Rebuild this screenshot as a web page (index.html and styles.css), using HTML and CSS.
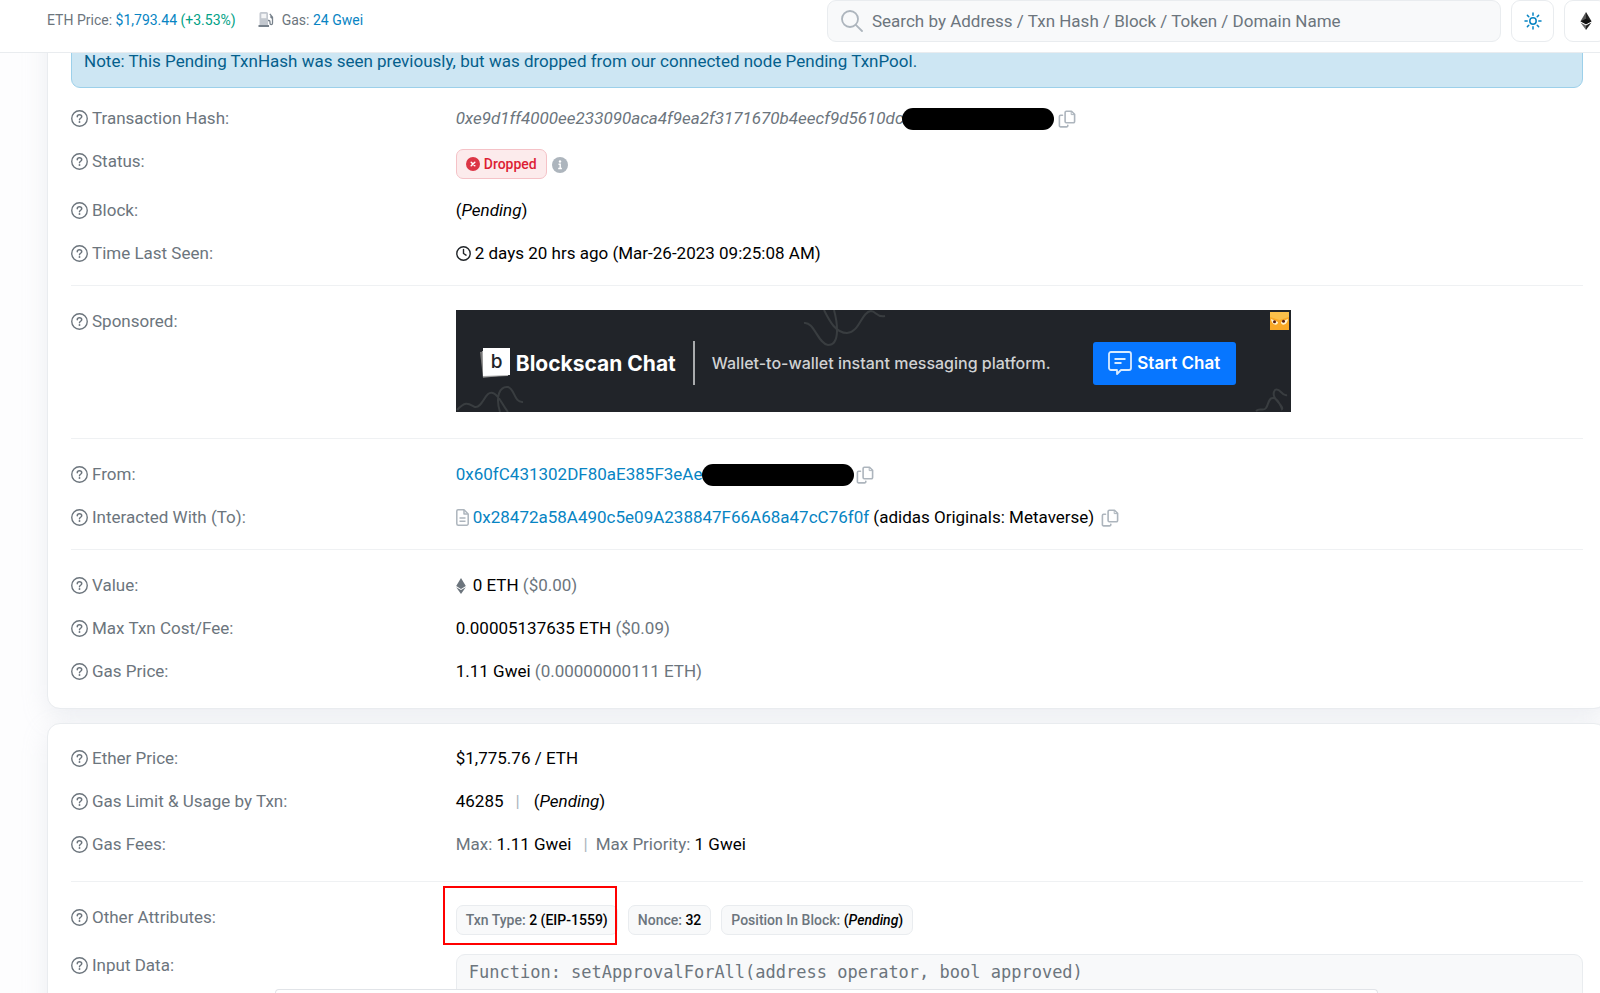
FILE: index.html
```html
<!DOCTYPE html>
<html lang="en">
<head>
<meta charset="utf-8">
<title>Transaction Details</title>
<link rel="stylesheet" href="styles.css">
</head>
<body>
<svg class="sprite" aria-hidden="true">
  <symbol id="help" viewBox="0 0 16 16"><g fill="none" stroke="currentColor" stroke-linecap="round" stroke-linejoin="round"><circle cx="8" cy="8" r="7.3" stroke-width="1.3"/><path d="M5.9 6.3c0-1.1.8-1.8 2-1.8 1.300 0 2.200.8 2.200 1.800 0 1.400-2.100 1.500-2.100 2.800" stroke-width="1.400"/></g><circle cx="8" cy="11.300" r=".9" fill="currentColor"/></symbol>
  <symbol id="copy" viewBox="0 0 18 18"><g fill="none" stroke="currentColor" stroke-width="1.600" stroke-linejoin="round" stroke-linecap="round"><path d="M8.300 1.200h5.200L16.600 4.300v7.200a1.200 1.200 0 0 1-1.200 1.200H8.300a1.200 1.200 0 0 1-1.200-1.200V2.400a1.200 1.200 0 0 1 1.200-1.200z"/><path d="M13.200 1.400v3.200h3.200"  stroke-width="1"/><path d="M4.500 5.300H2.600A1.200 1.200 0 0 0 1.400 6.500v9.200a1.200 1.200 0 0 0 1.200 1.200h6a1.200 1.200 0 0 0 1.200-1.200v-.5"/></g></symbol>
  <symbol id="eth" viewBox="0 0 10 16"><path fill="currentColor" d="M5 0l4.800 8.100L5 11 .2 8.100zM5 12l4.800-2.800L5 16 .2 9.200z"/></symbol>
</svg>
<div class="page">
  <header class="topbar">
    <div class="stats">
      <span>ETH Price: <a href="#">$1,793.44 <span class="up">(+3.53%)</span></a></span>
      <span class="gas">
        <svg class="pump" viewBox="0 0 16 16"><path fill="#c3c8cf" d="M1.500 1.500A1.500 1.500 0 0 1 3 0h5.500A1.500 1.500 0 0 1 10 1.500V13H1.500z"/><path fill="#f4f5f6" d="M3.300 1.800h5v4.400h-5z"/><path fill="#77818b" d="M.5 13h10.500v2H.5z"/><path fill="none" stroke="#77818b" stroke-width="1.300" d="M10 8.500h.8c.8 0 1.200.5 1.200 1.200v1.600c0 1.700 2.500 1.700 2.500 0V5.200L11.800 1.800M13 3.500v2l1.500 1"/></svg>
        <span>Gas: <a href="#">24 Gwei</a></span>
      </span>
    </div>
    <form class="search">
      <svg class="lens" viewBox="0 0 22 22"><g fill="none" stroke="#adb5bd" stroke-width="1.800" stroke-linecap="round"><circle cx="9" cy="9" r="8"/><path d="M14.800 14.800L21 21"/></g></svg>
      <input type="search" aria-label="Search" placeholder="Search by Address / Txn Hash / Block / Token / Domain Name">
    </form>
    <button class="tool" aria-label="Theme"><svg class="sun" viewBox="0 0 18 18"><g fill="none" stroke="#0784c3" stroke-width="1.500" stroke-linecap="round"><circle cx="9" cy="9" r="3.200"/><path d="M9 1v2.200M9 14.800V17M1 9h2.200M14.800 9H17M3.400 3.400l1.400 1.400M13.200 13.200l1.400 1.400M3.400 14.600l1.400-1.400M13.200 4.800l1.400-1.400"/></g></svg></button>
    <button class="tool last" aria-label="Network"><svg class="gem" viewBox="0 0 12 18"><path fill="#555" d="M6 0L.5 9.200 6 12.300z"/><path fill="#222" d="M6 0l5.500 9.200L6 12.300z"/><path fill="#111" d="M6 6.700L.5 9.200 6 12.300l5.500-3.100z"/><path fill="#666" d="M.5 10.400L6 18v-4.400z"/><path fill="#222" d="M11.500 10.400L6 18v-4.400z"/></svg></button>
  </header>

  <main>
    <section class="card">
      <div class="note">Note: This Pending TxnHash was seen previously, but was dropped from our connected node Pending TxnPool.</div>
      <dl class="rows">
        <div class="row"><dt><svg class="help"><use href="#help"/></svg>Transaction Hash:</dt><dd><em class="muted">0xe9d1ff4000ee233090aca4f9ea2f3171670b4eecf9d5610dc</em><span class="redacted over"></span><button class="copy" aria-label="Copy hash"><svg><use href="#copy"/></svg></button></dd></div>
        <div class="row"><dt><svg class="help"><use href="#help"/></svg>Status:</dt><dd><span class="badge danger"><svg class="cross" viewBox="0 0 14 14"><circle cx="7" cy="7" r="7" fill="#dc3545"/><path d="M5.200 5.200l3.600 3.600M8.800 5.200L5.200 8.800" stroke="#fff" stroke-width="1.500" stroke-linecap="round"/></svg>Dropped</span><svg class="info" viewBox="0 0 16 16"><circle cx="8" cy="8" r="8" fill="#adb5bd"/><circle cx="8" cy="4.500" r="1.200" fill="#fff"/><path d="M6.500 7.300h1.700v4M6.200 11.500h3.700" fill="none" stroke="#fff" stroke-width="1.400"/></svg></dd></div>
        <div class="row"><dt><svg class="help"><use href="#help"/></svg>Block:</dt><dd><span>(<em>Pending</em>)</span></dd></div>
        <div class="row"><dt><svg class="help"><use href="#help"/></svg>Time Last Seen:</dt><dd><svg class="clock" viewBox="0 0 15 15"><g fill="none" stroke="#212529" stroke-width="1.400" stroke-linecap="round"><circle cx="7.500" cy="7.500" r="6.700"/><path d="M7.500 3.500v4l2.500 1.700"/></g></svg>2 days 20 hrs ago (Mar-26-2023 09:25:08 AM)</dd></div>
      </dl>
      <hr>
      <dl class="rows">
        <div class="row"><dt><svg class="help"><use href="#help"/></svg>Sponsored:</dt><dd>
          <div class="banner">
            <svg class="squiggle top" viewBox="0 0 84 40"><path d="M2 13c10-2 14 21 24 22 13 0 9-24 6-35M22 0c6 12 12 23 23 23 13-1 14-21 24-22 5 0 6 7 14 5"/></svg>
            <svg class="squiggle left" viewBox="0 0 70 28"><path d="M1 26c9-10 12-6 18-3 8 1 10-17 18-14 6 2 8 10 15 19M44 28c-5-16 0-26 8-25 7 2 6 16 15 15"/></svg>
            <svg class="squiggle right" viewBox="0 0 34 24"><path d="M1 23c4-4 7 1 10-3s2-10 7-10 9 11 9 11c3-3-13-11-7-19 5-3 7 7 12 5"/></svg>
            <svg class="logo" viewBox="0 0 30 30"><path fill="#777" d="M0 4l24-3 3 26-24 3z"/><path fill="#aaa" d="M2 3l24-1 2 26-25 1z"/><path fill="#fff" d="M3 0h27v27L3 28z"/><text x="16.500" y="20" text-anchor="middle">b</text></svg>
            <strong>Blockscan Chat</strong>
            <span class="bar"></span>
            <span class="tagline">Wallet-to-wallet instant messaging platform.</span>
            <a class="start" href="#"><svg viewBox="0 0 24 24"><path fill="none" stroke="#d9ebff" stroke-width="1.800" stroke-linejoin="round" d="M3 1h18a2 2 0 0 1 2 2v14a2 2 0 0 1-2 2h-8l-4 4v-4H3a2 2 0 0 1-2-2V3a2 2 0 0 1 2-2zM6.500 8h11M6.500 12h7"/></svg>Start Chat</a>
            <svg class="mascot" viewBox="0 0 19 18"><path fill="#f9a826" d="M0 0h19v18H0z"/><path fill="#fbc04a" d="M0 0h19v5L9.500 8 0 5z"/><path fill="#fff3cf" d="M1 7l7 3c0 4-6 4-7-3zM18 7l-7 3c0 4 6 4 7-3z"/><circle cx="4.500" cy="9.700" r="1.500" fill="#5a1d10"/><circle cx="13.500" cy="9.200" r="1.500" fill="#5a1d10"/></svg>
          </div>
        </dd></div>
      </dl>
      <hr>
      <dl class="rows">
        <div class="row"><dt><svg class="help"><use href="#help"/></svg>From:</dt><dd><a href="#">0x60fC431302DF80aE385F3eAe</a><span class="redacted"></span><button class="copy near" aria-label="Copy sender"><svg><use href="#copy"/></svg></button></dd></div>
        <div class="row"><dt><svg class="help"><use href="#help"/></svg>Interacted With (To):</dt><dd><svg class="doc" viewBox="0 0 13 17"><g fill="none" stroke="#adb5bd" stroke-width="1.500" stroke-linejoin="round"><path d="M2 .8h6L12.200 5v9.700a1.500 1.500 0 0 1-1.500 1.500H2.300a1.500 1.500 0 0 1-1.500-1.500V2A1.200 1.200 0 0 1 2 .8z"/><path d="M8 1v4h4M3.500 9h6M3.500 12.200h6"/></g></svg><span><a href="#">0x28472a58A490c5e09A238847F66A68a47cC76f0f</a> (adidas Originals: Metaverse)</span><button class="copy far" aria-label="Copy receiver"><svg><use href="#copy"/></svg></button></dd></div>
      </dl>
      <hr>
      <dl class="rows">
        <div class="row"><dt><svg class="help"><use href="#help"/></svg>Value:</dt><dd><svg class="ethicon"><use href="#eth"/></svg><span>0 ETH <span class="muted">($0.00)</span></span></dd></div>
        <div class="row"><dt><svg class="help"><use href="#help"/></svg>Max Txn Cost/Fee:</dt><dd><span>0.00005137635 ETH <span class="muted">($0.09)</span></span></dd></div>
        <div class="row"><dt><svg class="help"><use href="#help"/></svg>Gas Price:</dt><dd><span>1.11 Gwei <span class="muted">(0.00000000111 ETH)</span></span></dd></div>
      </dl>
    </section>

    <section class="card second">
      <dl class="rows">
        <div class="row"><dt><svg class="help"><use href="#help"/></svg>Ether Price:</dt><dd>$1,775.76 / ETH</dd></div>
        <div class="row"><dt><svg class="help"><use href="#help"/></svg>Gas Limit &amp; Usage by Txn:</dt><dd>46285<span class="pipe wide">|</span><span>(<em>Pending</em>)</span></dd></div>
        <div class="row"><dt><svg class="help"><use href="#help"/></svg>Gas Fees:</dt><dd class="fees"><span><span class="muted">Max:</span> 1.11 Gwei</span><span class="pipe">|</span><span><span class="muted">Max Priority:</span> 1 Gwei</span></dd></div>
      </dl>
      <hr>
      <dl class="rows">
        <div class="row"><dt><svg class="help"><use href="#help"/></svg>Other Attributes:</dt><dd class="attrs"><span class="badge marked"><span><span class="muted">Txn Type:</span> 2 (EIP-1559)</span></span><span class="badge"><span><span class="muted">Nonce:</span> 32</span></span><span class="badge"><span><span class="muted">Position In Block:</span> (<em>Pending</em>)</span></span></dd></div>
        <div class="row"><dt><svg class="help"><use href="#help"/></svg>Input Data:</dt><dd><pre>Function: setApprovalForAll(address operator, bool approved)


</pre></dd></div>
      </dl>
    </section>
  </main>
  <div class="drawer"></div>
</div>
</body>
</html>
```
FILE: styles.css
```css
* { box-sizing: border-box; }
body {
  margin: 0;
  font: 17px/25px Roboto, "Liberation Sans", sans-serif;
  color: #000;
  background: #fdfdfe;
}
a { color: #0784c3; text-decoration: none; }
button { font: inherit; cursor: pointer; }
svg { flex: none; display: block; }
.sprite { position: absolute; width: 0; height: 0; }
.page { height: 100vh; overflow: hidden; }

.topbar {
  position: relative;
  z-index: 2;
  height: 53px;
  display: flex;
  align-items: flex-start;
  gap: 10px;
  padding-left: 47px;
  background: #fff;
  border-bottom: 1px solid #e9ecef;
}
.stats { display: flex; gap: 22px; flex: 1; font-size: 14px; line-height: 40px; color: #6c757d; }
.up { color: #00a186; }
.gas { display: flex; align-items: center; gap: 8px; }
.pump { width: 16px; height: 16px; }
.search {
  flex: none;
  width: 43.4%;
  height: 42px;
  display: flex;
  align-items: center;
  gap: 9px;
  padding: 0 13px;
  background: #f8f9fa;
  border: 1px solid #e9ecef;
  border-radius: 9px;
}
.lens { width: 22px; height: 22px; }
.search input { flex: 1; border: 0; padding: 0; background: none; font: inherit; outline: none; }
.search input::placeholder { color: #6c757d; opacity: 1; }
.tool {
  flex: none;
  width: 43px;
  height: 42px;
  padding: 0;
  display: grid;
  place-items: center;
  background: #fff;
  border: 1px solid #e9ecef;
  border-radius: 9px;
}
.tool.last { margin-right: -7px; }
.sun { width: 18px; height: 18px; }
.gem { width: 12px; height: 18px; }

main { margin: -42px -7px 0 47px; display: grid; gap: 14px; }
.card {
  padding: 24px 23px;
  background: #fff;
  border: 1px solid #e9ecef;
  border-radius: 13px;
  box-shadow: 0 8px 24px rgba(189, 197, 209, 0.25);
}
.card.second { padding-top: 22px; }
.note {
  padding: 12px 12px 13px;
  margin-bottom: 18px;
  color: #055f8c;
  background: #cde6f3;
  border: 1px solid #9cd0ea;
  border-radius: 9px;
}
.rows { margin: 0; display: grid; gap: 18px; }
.row { display: grid; grid-template-columns: 1fr 3fr; gap: 9px; align-items: start; }
dt { display: flex; align-items: center; gap: 4px; color: #6c757d; }
dd { margin: 0; display: flex; align-items: center; min-width: 0; }
.help { width: 17px; height: 17px; }
.muted { color: #6c757d; }
hr { border: 0; border-top: 1px solid #eff1f3; margin: 19px 0 23px; }

.redacted { width: 152px; height: 22px; border-radius: 11px; background: #000; }
.redacted.over { margin-left: -2px; }
.copy { border: 0; padding: 0; background: none; color: #adb5bd; margin-left: 4px; }
.copy.near { margin-left: 2px; }
.copy.far { margin-left: 7px; }
.copy svg { width: 18px; height: 18px; }
.badge {
  position: relative;
  display: flex;
  align-items: center;
  gap: 4px;
  height: 30px;
  padding: 0 9px;
  font-size: 14px;
  font-weight: 500;
  background: #f8f9fa;
  border: 1px solid #e9ecef;
  border-radius: 7px;
}
.badge.danger { margin-bottom: 1px; color: #dc1e35; background: #fcebec; border-color: #f5c2c7; }
.badge.marked::after { content: ""; position: absolute; inset: -20px 0 -11px -14px; border: 2px solid #f00; }
.cross { width: 14px; height: 14px; }
.info { width: 16px; height: 16px; margin-left: 5px; }
.clock { width: 15px; height: 15px; margin-right: 4px; }
.doc { width: 13px; height: 17px; margin-right: 4px; }
.ethicon { width: 10px; height: 16px; margin-right: 7px; color: #6c757d; }
.pipe { color: #adb5bd; margin: 0 8px 0 12px; }
.pipe.wide { margin-right: 14px; }
.fees { padding-bottom: 5px; }
.attrs { gap: 10px; }

.banner {
  position: relative;
  width: 835px;
  height: 102px;
  margin: 1px 0 7px;
  padding: 4px 55px 0 24px;
  display: flex;
  align-items: center;
  background: #212429;
  color: #fff;
  font-family: Inter, sans-serif;
  overflow: hidden;
}
.squiggle { position: absolute; fill: none; stroke: #393d40; stroke-width: 2; }
.squiggle.top { left: 346px; top: 0; width: 84px; height: 40px; }
.squiggle.left { left: 0; bottom: 0; width: 70px; height: 28px; }
.squiggle.right { right: 2px; bottom: 0; width: 34px; height: 24px; }
.mascot { position: absolute; right: 2px; top: 2px; width: 19px; height: 18px; }
.logo { width: 30px; height: 30px; margin-right: 6px; }
.logo text { font: 500 19px Inter, sans-serif; fill: #212429; }
.banner strong { font-size: 21px; font-weight: 700; }
.bar { width: 2px; height: 44px; margin: 0 17px; background: #a9abad; }
.tagline { font-size: 16px; font-weight: 500; color: #d0d2d3; }
.start {
  margin-left: auto;
  width: 143px;
  height: 43px;
  display: flex;
  align-items: center;
  justify-content: center;
  gap: 5px;
  border-radius: 3px;
  background: #0776ff;
  color: #fff;
  font-size: 17px;
  font-weight: 600;
}
.start svg { width: 24px; height: 24px; }

pre {
  flex: 1;
  margin: 1px 0 0;
  padding: 5px 12px;
  font: 17px/25px "DejaVu Sans Mono", monospace;
  color: #6c757d;
  background: #f8f9fa;
  border: 1px solid #e9ecef;
  border-radius: 9px;
}
.drawer {
  position: fixed;
  z-index: 3;
  left: 275px;
  right: 222px;
  bottom: 0;
  height: 4px;
  background: #fff;
  border: 1px solid #e1e4e8;
  border-bottom: 0;
  border-radius: 9px 9px 0 0;
}
```
